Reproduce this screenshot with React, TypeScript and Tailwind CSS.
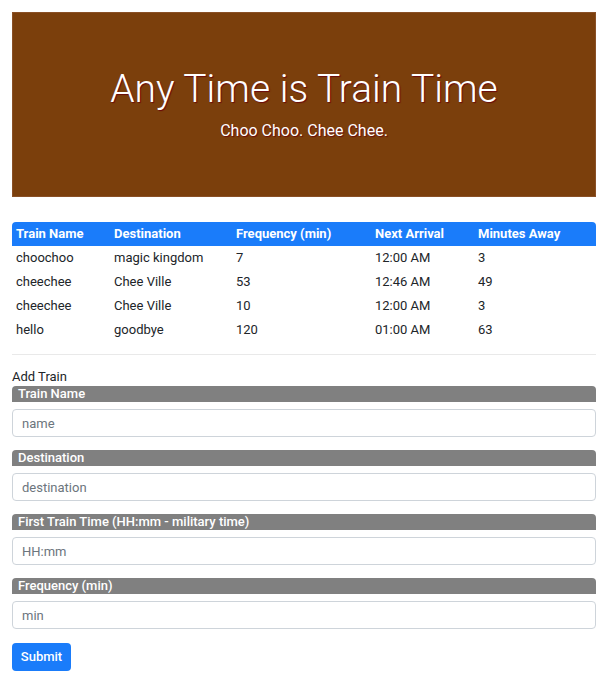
const trains = [
  { name: "choochoo", dest: "magic kingdom", freq: "7", next: "12:00 AM", away: "3" },
  { name: "cheechee", dest: "Chee Ville", freq: "53", next: "12:46 AM", away: "49" },
  { name: "cheechee", dest: "Chee Ville", freq: "10", next: "12:00 AM", away: "3" },
  { name: "hello", dest: "goodbye", freq: "120", next: "01:00 AM", away: "63" },
];

const fields = [
  { label: "Train Name", placeholder: "name" },
  { label: "Destination", placeholder: "destination" },
  { label: "First Train Time (HH:mm - military time)", placeholder: "HH:mm" },
  { label: "Frequency (min)", placeholder: "min" },
];

export default function App() {
  return (
    <div className="px-3 pt-3 text-[13px] text-[#212529] font-['Roboto',sans-serif]">
      {/* Jumbotron */}
      <div className="h-[185px] bg-[#7b3f0c] border border-[#8a5026] flex flex-col items-center justify-center text-white [text-shadow:1px_1px_1px_#6b0a0a]">
        <h1 className="text-[39px] font-light leading-none mt-[-1px]">Any Time is Train Time</h1>
        <p className="text-[16px] leading-none mt-[14px]">Choo Choo. Chee Chee.</p>
      </div>

      {/* Schedule */}
      <table className="w-full mt-[25px] text-left border-collapse">
        <thead>
          <tr className="bg-[#1a7cfa] text-white font-bold h-[24px]">
            <th className="pl-1 w-[99px] rounded-tl-sm">Train Name</th>
            <th className="pl-[3px] w-[122px]">Destination</th>
            <th className="pl-[3px] w-[139px]">Frequency (min)</th>
            <th className="pl-[3px] w-[103px]">Next Arrival</th>
            <th className="pl-[3px] rounded-tr-sm">Minutes Away</th>
          </tr>
        </thead>
        <tbody>
          {trains.map((t, i) => (
            <tr key={i} className="h-[24px]">
              <td className="pl-1">{t.name}</td>
              <td className="pl-[3px]">{t.dest}</td>
              <td className="pl-[3px]">{t.freq}</td>
              <td className="pl-[3px]">{t.next}</td>
              <td className="pl-[3px]">{t.away}</td>
            </tr>
          ))}
        </tbody>
      </table>

      <hr className="mt-[12px] border-t border-[#e9e9e9]" />

      {/* Form */}
      <div className="mt-[15px] leading-none">Add Train</div>
      <form className="mt-[3px]">
        {fields.map((f) => (
          <div key={f.label} className="mb-[13px]">
            <div className="h-[16px] bg-[#808080] text-white font-medium pl-[6px] flex items-center rounded-t-sm">
              {f.label}
            </div>
            <input
              className="mt-[7px] block w-full h-[28px] border border-[#ced4da] rounded px-[9px] text-[13px] placeholder:text-[#6c757d] outline-none"
              placeholder={f.placeholder}
            />
          </div>
        ))}
        <button
          type="button"
          className="mt-[1px] bg-[#1a7cfa] text-white font-medium rounded h-[28px] w-[59px]"
        >
          Submit
        </button>
      </form>
    </div>
  );
}
